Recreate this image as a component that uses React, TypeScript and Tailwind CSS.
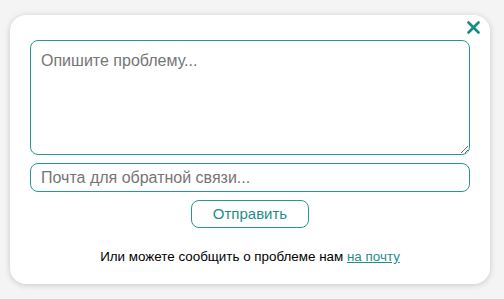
import * as React from "react";

const App: React.FC = () => {
  return (
    <div className="min-h-[299px] w-[504px] bg-[#f4f4f4] pt-[15px] pl-[10px] font-['Liberation_Sans',Arial,sans-serif]">
      <div className="relative flex w-[480px] h-[269px] flex-col rounded-[16px] bg-white px-5 pt-[25px] shadow-[0_1px_6px_rgba(0,0,0,0.18)]">
        <button className="absolute right-[7px] top-[2px] flex h-[20px] w-[20px] items-center justify-center text-[#168b84]">
          <svg width="13" height="13" viewBox="0 0 13 13">
            <path d="M1.5 1.5 L11.5 11.5 M11.5 1.5 L1.5 11.5" stroke="currentColor" strokeWidth="2.6" strokeLinecap="round" />
          </svg>
        </button>
        <textarea
          placeholder="Опишите проблему..."
          className="h-[115px] w-full resize-y rounded-[8px] border border-[#2a9692] px-[10px] py-[8px] text-[16px] text-[#333] outline-none placeholder:text-[#757575]"
        />
        <input
          placeholder="Почта для обратной связи..."
          className="mt-[8px] h-[29px] w-full rounded-[8px] border border-[#2a9692] px-[10px] text-[16px] text-[#333] outline-none placeholder:text-[#757575]"
        />
        <div className="mt-[8px] flex justify-center">
          <button className="h-[28px] w-[118px] rounded-[8px] border border-[#2a9692] bg-white text-[15px] text-[#1f8e88]">
            Отправить
          </button>
        </div>
        <p className="mt-[19px] text-center text-[13.4px] text-black">
          Или можете сообщить о проблеме нам{" "}
          <a href="#" className="text-[#1f8e88] underline">
            на почту
          </a>
        </p>
      </div>
    </div>
  );
};

export default App;
